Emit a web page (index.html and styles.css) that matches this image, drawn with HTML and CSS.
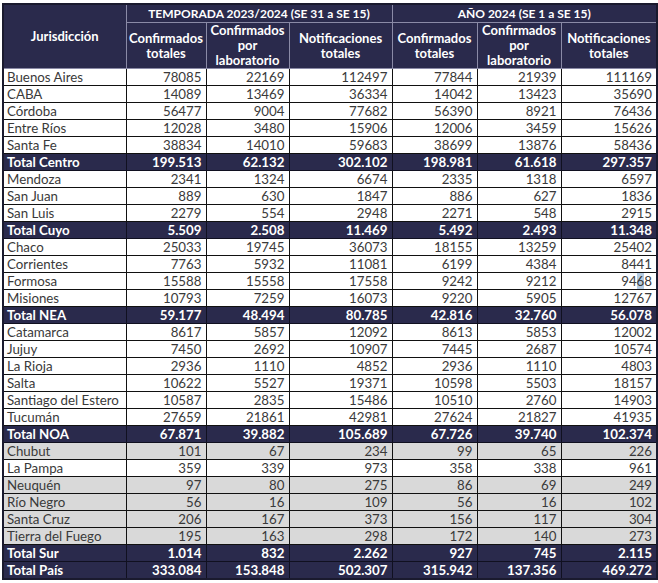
FILE: index.html
```html
<!DOCTYPE html>
<html lang="es">
<head>
<meta charset="utf-8">
<title>Tabla</title>
<link rel="stylesheet" href="styles.css">
</head>
<body>
<table class="tbl">
<colgroup>
<col class="c1"><col class="c2"><col class="c3"><col class="c4"><col class="c5"><col class="c6"><col class="c7">
</colgroup>
<thead>
<tr class="h1">
<th rowspan="2" class="jur">Jurisdicción</th>
<th colspan="3">TEMPORADA 2023/2024 (SE 31 a SE 15)</th>
<th colspan="3">AÑO 2024 (SE 1 a SE 15)</th>
</tr>
<tr class="h2">
<th>Confirmados<br>totales</th>
<th>Confirmados<br>por<br>laboratorio</th>
<th>Notificaciones<br>totales</th>
<th>Confirmados<br>totales</th>
<th>Confirmados<br>por<br>laboratorio</th>
<th>Notificaciones<br>totales</th>
</tr>
</thead>
<tbody>
<tr><td>Buenos Aires</td><td>78085</td><td>22169</td><td>112497</td><td>77844</td><td>21939</td><td>111169</td></tr>
<tr><td>CABA</td><td>14089</td><td>13469</td><td>36334</td><td>14042</td><td>13423</td><td>35690</td></tr>
<tr><td>Córdoba</td><td>56477</td><td>9004</td><td>77682</td><td>56390</td><td>8921</td><td>76436</td></tr>
<tr><td>Entre Ríos</td><td>12028</td><td>3480</td><td>15906</td><td>12006</td><td>3459</td><td>15626</td></tr>
<tr><td>Santa Fe</td><td>38834</td><td>14010</td><td>59683</td><td>38699</td><td>13876</td><td>58436</td></tr>
<tr class="tot"><td>Total Centro</td><td>199.513</td><td>62.132</td><td>302.102</td><td>198.981</td><td>61.618</td><td>297.357</td></tr>
<tr><td>Mendoza</td><td>2341</td><td>1324</td><td>6674</td><td>2335</td><td>1318</td><td>6597</td></tr>
<tr><td>San Juan</td><td>889</td><td>630</td><td>1847</td><td>886</td><td>627</td><td>1836</td></tr>
<tr><td>San Luis</td><td>2279</td><td>554</td><td>2948</td><td>2271</td><td>548</td><td>2915</td></tr>
<tr class="tot"><td>Total Cuyo</td><td>5.509</td><td>2.508</td><td>11.469</td><td>5.492</td><td>2.493</td><td>11.348</td></tr>
<tr><td>Chaco</td><td>25033</td><td>19745</td><td>36073</td><td>18155</td><td>13259</td><td>25402</td></tr>
<tr><td>Corrientes</td><td>7763</td><td>5932</td><td>11081</td><td>6199</td><td>4384</td><td>8441</td></tr>
<tr><td>Formosa</td><td>15588</td><td>15558</td><td>17558</td><td>9242</td><td>9212</td><td>94<span class="mark">6</span>8</td></tr>
<tr><td>Misiones</td><td>10793</td><td>7259</td><td>16073</td><td>9220</td><td>5905</td><td>12767</td></tr>
<tr class="tot"><td>Total NEA</td><td>59.177</td><td>48.494</td><td>80.785</td><td>42.816</td><td>32.760</td><td>56.078</td></tr>
<tr><td>Catamarca</td><td>8617</td><td>5857</td><td>12092</td><td>8613</td><td>5853</td><td>12002</td></tr>
<tr><td>Jujuy</td><td>7450</td><td>2692</td><td>10907</td><td>7445</td><td>2687</td><td>10574</td></tr>
<tr><td>La Rioja</td><td>2936</td><td>1110</td><td>4852</td><td>2936</td><td>1110</td><td>4803</td></tr>
<tr><td>Salta</td><td>10622</td><td>5527</td><td>19371</td><td>10598</td><td>5503</td><td>18157</td></tr>
<tr><td>Santiago del Estero</td><td>10587</td><td>2835</td><td>15486</td><td>10510</td><td>2760</td><td>14903</td></tr>
<tr><td>Tucumán</td><td>27659</td><td>21861</td><td>42981</td><td>27624</td><td>21827</td><td>41935</td></tr>
<tr class="tot"><td>Total NOA</td><td>67.871</td><td>39.882</td><td>105.689</td><td>67.726</td><td>39.740</td><td>102.374</td></tr>
<tr class="gray"><td>Chubut</td><td>101</td><td>67</td><td>234</td><td>99</td><td>65</td><td>226</td></tr>
<tr><td>La Pampa</td><td>359</td><td>339</td><td>973</td><td>358</td><td>338</td><td>961</td></tr>
<tr class="gray"><td>Neuquén</td><td>97</td><td>80</td><td>275</td><td>86</td><td>69</td><td>249</td></tr>
<tr class="gray"><td>Río Negro</td><td>56</td><td>16</td><td>109</td><td>56</td><td>16</td><td>102</td></tr>
<tr class="gray"><td>Santa Cruz</td><td>206</td><td>167</td><td>373</td><td>156</td><td>117</td><td>304</td></tr>
<tr class="gray"><td>Tierra del Fuego</td><td>195</td><td>163</td><td>298</td><td>172</td><td>140</td><td>273</td></tr>
<tr class="tot"><td>Total Sur</td><td>1.014</td><td>832</td><td>2.262</td><td>927</td><td>745</td><td>2.115</td></tr>
<tr class="tot"><td>Total País</td><td>333.084</td><td>153.848</td><td>502.307</td><td>315.942</td><td>137.356</td><td>469.272</td></tr>
</tbody>
</table>
</body>
</html>
```
FILE: styles.css
```css
html, body {
  margin: 0;
  padding: 0;
  background: #ffffff;
}
body {
  padding: 3px 2px 0 2px;
  font-family: Lato, "Noto Sans", "Liberation Sans", sans-serif;
}
.tbl {
  border-collapse: collapse;
  table-layout: fixed;
  width: 654px;
  border: 2px solid #1a1a2e;
}
.c1 { width: 123px; }
.c2 { width: 80px; }
.c3 { width: 83px; }
.c4 { width: 103px; }
.c5 { width: 85px; }
.c6 { width: 84px; }
.c7 { width: 96px; }

.tbl th {
  background: #2a2a4c;
  color: #ffffff;
  font-weight: 700;
  font-size: 13px;
  line-height: 15px;
  text-align: center;
  border: 1px solid #8a8aa6;
  padding: 0 2px;
}
.h1 th { height: 17px; font-size: 12px; }
.h2 th { height: 45px; }
.tbl th.jur { font-size: 13px; }

.tbl td {
  height: 16px;
  padding: 0 4px 0 3px;
  font-size: 13.3px;
  line-height: 16px;
  color: #3a3a3a;
  text-align: right;
  border: 1px solid #111111;
  white-space: nowrap;
  overflow: hidden;
}
.tbl td:first-child {
  text-align: left;
}
.tbl tr.gray td {
  background: #d9d9d9;
}
.tbl tr.tot td {
  background: #2a2a4c;
  color: #ffffff;
  font-weight: 700;
  border-color: #101020;
}
.mark {
  background: rgba(120, 160, 200, 0.55);
}
```
